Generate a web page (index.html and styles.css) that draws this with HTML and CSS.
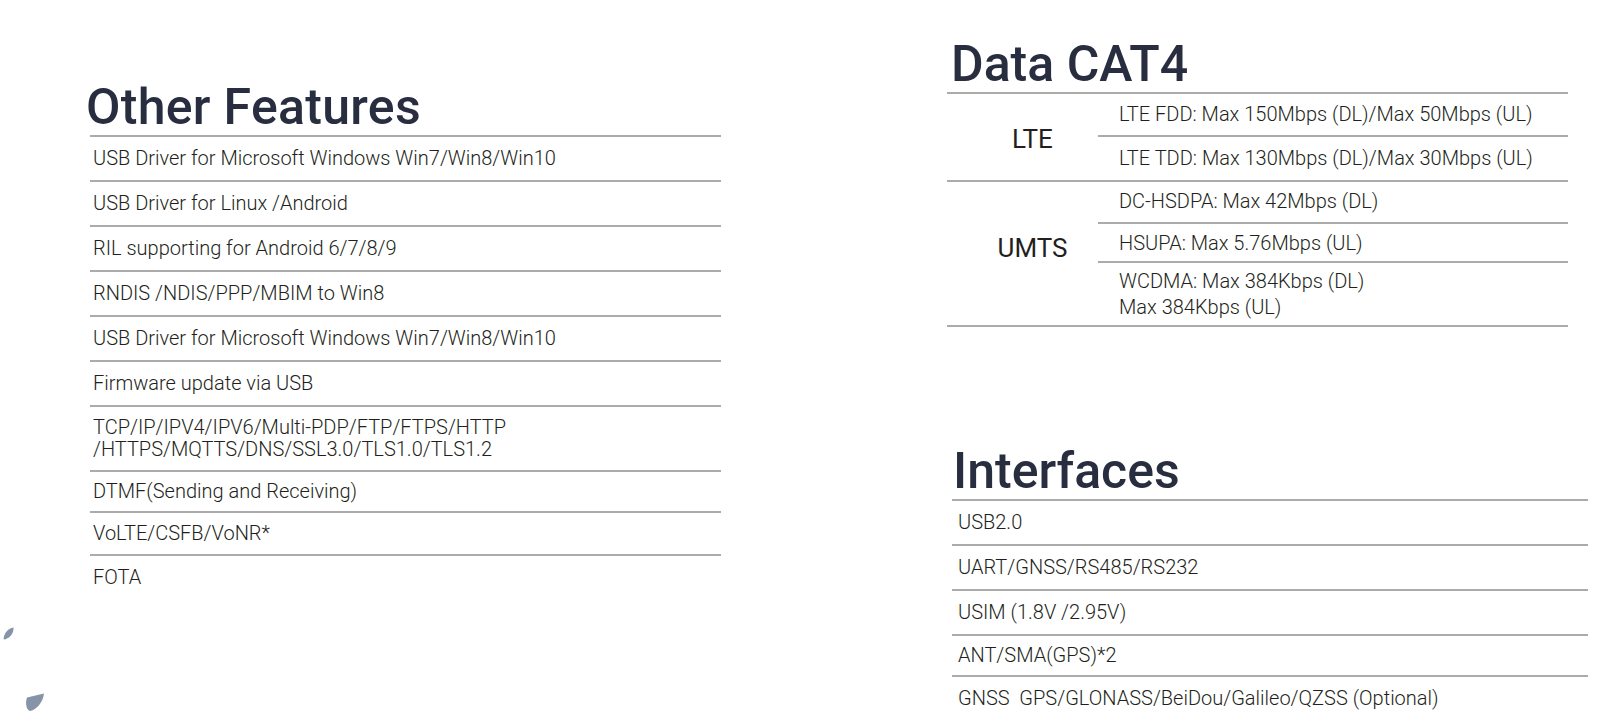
FILE: index.html
```html
<!DOCTYPE html>
<html lang="en">

<head>
    <meta charset="UTF-8"/>
    <title>Module Specs</title>
    <link rel="stylesheet" href="styles.css">
</head>

<body>
<div class="page">
    <div class="col-left">
        <h1>Other Features</h1>
        <div class="list">
            <div class="row">USB Driver for Microsoft Windows Win7/Win8/Win10</div>
            <div class="row">USB Driver for Linux /Android</div>
            <div class="row">RIL supporting for Android 6/7/8/9</div>
            <div class="row">RNDIS /NDIS/PPP/MBIM to Win8</div>
            <div class="row">USB Driver for Microsoft Windows Win7/Win8/Win10</div>
            <div class="row">Firmware update via USB</div>
            <div class="row tall">TCP/IP/IPV4/IPV6/Multi-PDP/FTP/FTPS/HTTP<br>/HTTPS/MQTTS/DNS/SSL3.0/TLS1.0/TLS1.2</div>
            <div class="row tight">DTMF(Sending and Receiving)</div>
            <div class="row mid">VoLTE/CSFB/VoNR*</div>
            <div class="row last">FOTA</div>
        </div>
    </div>

    <div class="col-right">
        <h1 class="data-title">Data CAT4</h1>
        <div class="data">
            <div class="group">
                <div class="label lte">LTE</div>
                <div class="values">
                    <div class="val">LTE FDD: Max 150Mbps (DL)/Max 50Mbps (UL)</div>
                    <div class="val wide">LTE TDD: Max 130Mbps (DL)/Max 30Mbps (UL)</div>
                </div>
            </div>
            <div class="group">
                <div class="label umts">UMTS</div>
                <div class="values">
                    <div class="val first">DC-HSDPA: Max 42Mbps (DL)</div>
                    <div class="val short">HSUPA: Max 5.76Mbps (UL)</div>
                    <div class="val double">WCDMA: Max 384Kbps (DL)<br>Max 384Kbps (UL)</div>
                </div>
            </div>
        </div>

        <h1 class="if-title">Interfaces</h1>
        <div class="list if-list">
            <div class="row">USB2.0</div>
            <div class="row">UART/GNSS/RS485/RS232</div>
            <div class="row">USIM (1.8V /2.95V)</div>
            <div class="row tight">ANT/SMA(GPS)*2</div>
            <div class="row last">GNSS&nbsp;&nbsp;GPS/GLONASS/BeiDou/Galileo/QZSS (Optional)</div>
        </div>
    </div>
</div>

<!-- leftover bits of the page decoration -->
<svg class="deco" width="50" height="100" viewBox="0 0 50 100">
    <path d="M3.5 19 C4 13 8.5 8 13.5 7.5 C14 12.5 10.5 17.5 5 19.5 Z"/>
    <path d="M27 77.5 L44 73.5 C43 82.5 36 90.5 29.5 91 C25.5 88.5 25.5 81.5 27 77.5 Z"/>
</svg>
</body>

</html>
```

FILE: styles.css
```css
* {
    margin: 0;
    padding: 0;
    box-sizing: border-box;
}

body {
    width: 1599px;
    height: 721px;
    overflow: hidden;
    position: relative;
    background: #fff;
    color: #231f20;
    font-family: Roboto, "Liberation Sans", sans-serif;
    font-weight: 300;
    font-size: 20px;
}

.page {
    display: flex;
}

h1 {
    font-size: 50px;
    line-height: 50px;
    font-weight: 500;
    color: #282e40;
    margin-bottom: 3px;
}

/* left column */
.col-left {
    width: 635px;
    margin-left: 86px;
    padding-top: 82px;
}

.col-left h1 {
    letter-spacing: 0.3px;
}

.list {
    margin-left: 4px;
    border-top: 2px solid #ababab;
}

.row {
    line-height: 25px;
    padding: 9px 3px 9px;
    border-bottom: 2px solid #ababab;
}

.row.tall {
    line-height: 22px;
    padding: 9px 3px 10px;
}

.row.tight {
    padding: 7px 3px 7px;
}

.row.mid {
    padding: 8px 3px 8px;
}

.row.last {
    border-bottom: 0;
}

/* right column */
.col-right {
    width: 641px;
    margin-left: 226px;
    padding-top: 39px;
}

.data-title {
    margin-left: 4px;
}

.data {
    width: 621px;
    border-top: 2px solid #ababab;
}

.group {
    display: flex;
    border-bottom: 2px solid #ababab;
}

.label {
    width: 151px;
    padding-left: 20px;
    display: flex;
    align-items: center;
    justify-content: center;
    font-size: 26px;
    font-weight: 400;
}

.label.lte {
    padding-top: 3px;
}

.label.umts {
    padding-bottom: 12px;
}

.values {
    flex: 1;
}

.val {
    line-height: 25px;
    padding: 8px 0 8px 21px;
    border-bottom: 2px solid #ababab;
}

.val:last-child {
    border-bottom: 0;
}

.val.wide {
    padding: 9px 0 9px 21px;
}

.val.first {
    padding: 7px 0 8px 21px;
}

.val.short {
    padding: 7px 0 5px 21px;
}

.val.double {
    line-height: 26px;
    padding: 5px 0 5px 21px;
}

.if-title {
    margin-top: 119px;
    margin-left: 6px;
}

.if-list {
    margin-left: 5px;
    width: 636px;
}

.if-list .row {
    padding-left: 6px;
}

.deco {
    position: absolute;
    left: 0;
    top: 620px;
    fill: #8793a8;
}
```
